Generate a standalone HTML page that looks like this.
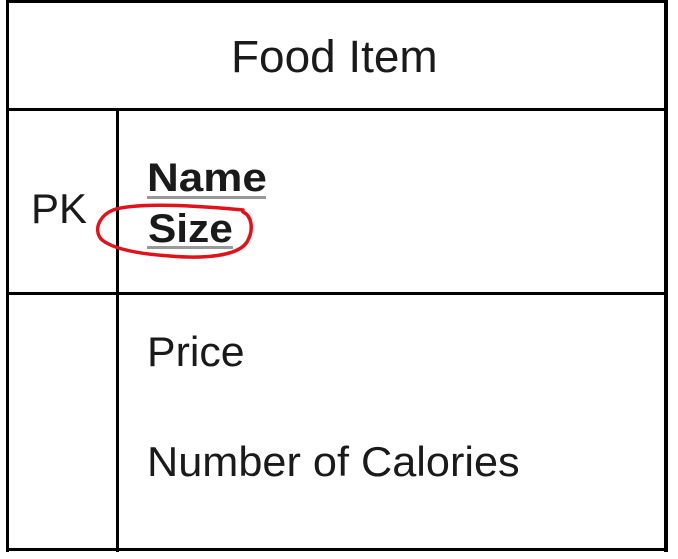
<!DOCTYPE html>
<html><head><style>
body{margin:0;width:678px;height:559px;background:#fff;position:relative;overflow:hidden;font-family:"Liberation Sans",Arial,sans-serif;color:#1a1a1a}
.b{position:absolute;background:#000}
.t{position:absolute;white-space:nowrap;line-height:1}
</style></head><body>
<div class="b" style="left:6px;top:0;width:662px;height:3px"></div>
<div class="b" style="left:6px;top:0;width:3px;height:552px"></div>
<div class="b" style="left:664px;top:0;width:4px;height:552px"></div>
<div class="b" style="left:6px;top:548px;width:662px;height:3px"></div>
<div class="b" style="left:6px;top:108px;width:662px;height:3px"></div>
<div class="b" style="left:6px;top:292px;width:662px;height:3px"></div>
<div class="b" style="left:116px;top:108px;width:3px;height:444px"></div>
<div class="t" style="left:231px;top:34px;font-size:45px;transform:scaleX(1.02);transform-origin:left">Food Item</div>
<div class="t" style="left:31px;top:188px;font-size:42px">PK</div>
<div class="t" style="left:147px;top:158px;font-size:40px;font-weight:bold;transform:scaleX(1.1);transform-origin:left">Name</div>
<div class="b" style="left:147px;top:196px;width:119px;height:3px;background:#999"></div>
<div class="t" style="left:148px;top:209px;font-size:40px;font-weight:bold;transform:scaleX(1.06);transform-origin:left">Size</div>
<div class="b" style="left:147px;top:246px;width:86px;height:3px;background:#999"></div>
<div class="t" style="left:147px;top:331px;font-size:42px;transform:scaleX(1.02);transform-origin:left">Price</div>
<div class="t" style="left:147px;top:441px;font-size:42px;transform:scaleX(1.03);transform-origin:left">Number of Calories</div>
<svg style="position:absolute;left:0;top:0" width="678" height="559">
<path d="M243 212 C252 216 254 230 247 242 C238 256 205 259 170 256 C140 254 112 249 101 239 C93 229 100 214 116 209 C140 203 190 205 243 210" fill="none" stroke="#e0121c" stroke-width="3.5" stroke-linecap="round"/>
</svg>
</body></html>
